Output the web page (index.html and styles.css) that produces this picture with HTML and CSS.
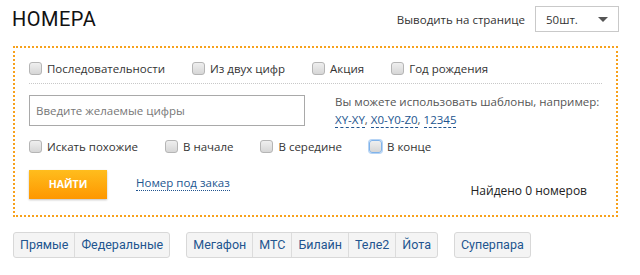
FILE: index.html
```html
<!DOCTYPE html>
<html lang="ru">
<head>
    <meta charset="UTF-8">
    <title>Номера</title>
    <link rel="stylesheet" href="styles.css">
</head>
<body>
    <div class="page">
        <div class="top-bar">
            <h1 class="title">НОМЕРА</h1>
            <div class="per-page">
                <span>Выводить на странице</span>
                <div class="select">50шт.<span class="arrow"></span></div>
            </div>
        </div>

        <div class="filter-box">
            <div class="check-row first-row">
                <label class="check"><span class="box"></span>Последовательности</label>
                <label class="check"><span class="box"></span>Из двух цифр</label>
                <label class="check"><span class="box"></span>Акция</label>
                <label class="check"><span class="box"></span>Год рождения</label>
            </div>

            <div class="search-row">
                <input type="text" class="digits-input" placeholder="Введите желаемые цифры">
                <div class="hint">
                    Вы можете использовать шаблоны, например:<br>
                    <a href="#" class="dash-link">XY-XY</a>, <a href="#" class="dash-link">X0-Y0-Z0</a>, <a href="#" class="dash-link">12345</a>
                </div>
            </div>

            <div class="check-row">
                <label class="check"><span class="box"></span>Искать похожие</label>
                <label class="check"><span class="box"></span>В начале</label>
                <label class="check"><span class="box"></span>В середине</label>
                <label class="check"><span class="box focus"></span>В конце</label>
            </div>

            <div class="action-row">
                <button class="find-btn">НАЙТИ</button>
                <a href="#" class="order-link">Номер под заказ</a>
                <div class="found">Найдено 0 номеров</div>
            </div>
        </div>

        <div class="tabs">
            <div class="tab-group">
                <a href="#" class="tab">Прямые</a>
                <a href="#" class="tab">Федеральные</a>
            </div>
            <div class="tab-group">
                <a href="#" class="tab">Мегафон</a>
                <a href="#" class="tab">МТС</a>
                <a href="#" class="tab">Билайн</a>
                <a href="#" class="tab">Теле2</a>
                <a href="#" class="tab">Йота</a>
            </div>
            <div class="tab-group">
                <a href="#" class="tab">Суперпара</a>
            </div>
        </div>
    </div>
</body>
</html>
```

FILE: styles.css
```css
:root {
    --orange: #f7a11c;
    --blue: #22558f;
    --text: #333333;
}

* {
    margin: 0;
    padding: 0;
    box-sizing: border-box;
}

body {
    font-family: "Open Sans", "DejaVu Sans", sans-serif;
    font-size: 11.5px;
    color: var(--text);
    background: #ffffff;
}

.page {
    width: 640px;
    padding: 0 22px 0 13px;
}

.top-bar {
    display: flex;
    justify-content: space-between;
    align-items: center;
    height: 38px;
}

.title {
    font-family: "Roboto", "DejaVu Sans", sans-serif;
    font-size: 20px;
    font-weight: 400;
    color: #111;
    margin-left: -1px;
    letter-spacing: 0.5px;
}

.per-page {
    display: flex;
    align-items: center;
    gap: 10px;
    margin-right: -1px;
}

.select {
    display: flex;
    align-items: center;
    justify-content: space-between;
    width: 84px;
    height: 26px;
    padding: 0 10px;
    border: 1px solid #c9c9c9;
}

.arrow {
    width: 0;
    height: 0;
    border-left: 5px solid transparent;
    border-right: 5px solid transparent;
    border-top: 5px solid #555;
}

.filter-box {
    margin-top: 8px;
    border: 2px dotted var(--orange);
    padding: 9px 14px 16px;
}

.check-row {
    display: flex;
    align-items: center;
    height: 24px;
}

.first-row {
    border-bottom: 1px dotted #c8c8c8;
    height: 27px;
    padding-bottom: 3px;
}

.check {
    display: flex;
    align-items: center;
    margin-right: 27px;
    cursor: pointer;
    white-space: nowrap;
}

.box {
    width: 13px;
    height: 13px;
    margin-right: 5px;
    border: 1px solid #b5b5b5;
    border-radius: 3px;
    background: linear-gradient(#efefef, #d6d6d6);
}

.box.focus {
    border-color: #80b3ea;
    box-shadow: 0 0 0 1px #b6d4f5;
}

.search-row {
    display: flex;
    align-items: flex-start;
    margin: 11px 0 5px;
}

.digits-input {
    width: 276px;
    height: 31px;
    padding: 0 6px;
    border: 1px solid #a9a9a9;
    font-family: inherit;
    font-size: 11.5px;
    outline: none;
}

.digits-input::placeholder {
    color: #777;
}

.hint {
    margin-left: 30px;
    margin-top: -2px;
    color: #555;
    line-height: 18px;
    white-space: nowrap;
}

.dash-link,
.order-link {
    color: var(--blue);
    text-decoration: none;
    border-bottom: 1px dashed var(--blue);
}

.order-link {
    border-bottom-style: dotted;
    margin-left: 29px;
    margin-top: -2px;
}

.action-row {
    display: flex;
    align-items: center;
    margin-top: 11px;
}

.find-btn {
    width: 78px;
    height: 29px;
    border: none;
    color: #fff;
    font-family: inherit;
    font-size: 10.5px;
    font-weight: 700;
    background: linear-gradient(#ffbd1d, #fe9700);
    box-shadow: 0 1px 2px rgba(0, 0, 0, 0.25);
    cursor: pointer;
}

.found {
    margin-left: auto;
    margin-right: 15px;
    margin-top: 13px;
    color: #222;
    font-size: 12px;
}

.tabs {
    display: flex;
    gap: 16px;
    margin-top: 15px;
}

.tab-group {
    display: flex;
    border: 1px solid #d8d8d8;
    border-radius: 3px;
    background: #f4f4f4;
}

.tab {
    display: block;
    padding: 0 6px;
    height: 24px;
    line-height: 24px;
    font-family: "Roboto", "DejaVu Sans", sans-serif;
    font-size: 12.5px;
    color: var(--blue);
    text-decoration: none;
    border-left: 1px solid #dcdcdc;
}

.tab:first-child {
    border-left: none;
}
```
